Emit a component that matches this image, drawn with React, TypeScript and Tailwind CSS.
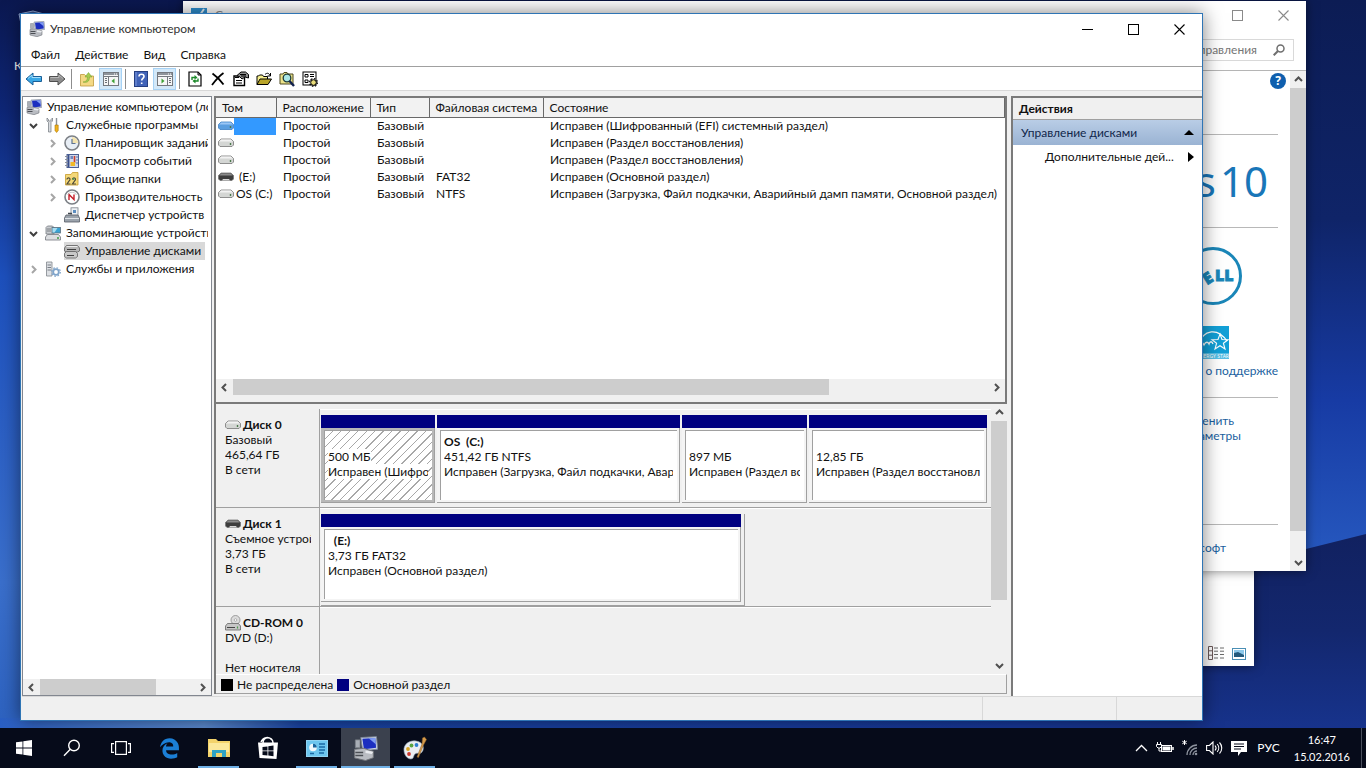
/*
this file:
    - draws the desktop with the computer management window, two windows behind it and the taskbar
*/

import type { ReactNode } from "react";
import clsx from "clsx";
import { FaEdgeLegacy } from "react-icons/fa";


/* ---------- small icons ---------- */

function ComputerIcon({ size = 16 }: { size?: number }) {
    return (
        <svg width={size} height={size} viewBox="0 0 16 16">
            <path d="M5 1l10-.6.8 8-9.600 1.200z" fill="#c9d2e2" stroke="#7d8797" strokeWidth=".6" />
            <path d="M6 1.800l8.200-.5.6 6.200-7.800.9z" fill="#1c2fc0" />
            <path d="M10 1.500l4.200-.3.4 4z" fill="#7f9cf2" />
            <path d="M1 8.500l6-.6 6 2v4L8 15.700 1 14z" fill="#b9bcc2" stroke="#6f7278" strokeWidth=".6" />
            <path d="M1.500 10.500h5M1.500 12.500h5" stroke="#4c4f55" strokeWidth="1" />
            <path d="M8 9.300l5 .8-1 1.400-4-.6z" fill="#e9ebef" />
            <path d="M1.500 2.500h3v5h-3z" fill="#a9aeb6" stroke="#7b8088" strokeWidth=".5" />
        </svg>
    );
}

function DriveIcon({ tone = "light" }: { tone?: "light" | "dark" | "selected" }) {
    const top = tone === "dark" ? "#8b8b8b" : tone === "selected" ? "#9cc6f5" : "#f2f2f2";
    const front = tone === "dark" ? "#3d3d3d" : tone === "selected" ? "#5b9ee0" : "#d4d6d4";
    const edge = tone === "selected" ? "#3f80c4" : "#777777";
    return (
        <svg width="16" height="10" viewBox="0 0 16 10" className="shrink-0">
            <path d="M3 1h10l2.500 2.500v3.500L14 8.500H2L.5 7V3.500z" fill={front} stroke={edge} strokeWidth=".8" />
            <path d="M3.200 1.400h9.600l2 2.200H1.200z" fill={top} />
            {tone === "dark"
                ? <path d="M4 8.500l1-1.500h6l1 1.500z" fill="#d8d8d8" />
                : <path d="M12.500 5v2" stroke="#4c7a4c" strokeWidth="1.400" />}
        </svg>
    );
}

function CdIcon() {
    return (
        <svg width="16" height="16" viewBox="0 0 16 16" className="shrink-0">
            <circle cx="10.500" cy="5" r="4.500" fill="#dcdcdc" stroke="#8a8a8a" strokeWidth=".8" />
            <circle cx="10.500" cy="5" r="1.300" fill="#ffffff" stroke="#8a8a8a" strokeWidth=".6" />
            <path d="M2.500 8.500h11L15.500 11v4H.5v-4z" fill="#c6c6c6" stroke="#666666" strokeWidth=".8" />
            <path d="M2 12.500h8" stroke="#444444" />
            <path d="M12.500 11.500v2" stroke="#4c9a4c" strokeWidth="1.200" />
        </svg>
    );
}

function ToolsIcon() {
    return (
        <svg width="16" height="16" viewBox="0 0 16 16">
            <path d="M2 1v3l1.500 1.500V15h2.500V5.500L7.500 4V1L6 2.500v1.500H3.500V2.500z" fill="#d9dce0" stroke="#70757c" strokeWidth=".7" />
            <path d="M11.500 1v7" stroke="#8a8f96" strokeWidth="1.400" />
            <path d="M10 8h3.200v5.500L11.600 15.500 10 13.500z" fill="#f1b21c" stroke="#a8760a" strokeWidth=".6" />
        </svg>
    );
}

function ClockIcon() {
    return (
        <svg width="16" height="16" viewBox="0 0 16 16">
            <circle cx="8" cy="8" r="7" fill="#e8eef5" stroke="#7c8086" strokeWidth="1.600" />
            <path d="M8 2a6 6 0 0 1 6 6H8z" fill="#f3e3ae" />
            <path d="M8 4v4.500h3.500" stroke="#5f7492" strokeWidth="1.200" fill="none" />
        </svg>
    );
}

function EventsIcon() {
    return (
        <svg width="16" height="16" viewBox="0 0 16 16">
            <rect x="3" y="1.500" width="11.500" height="13" fill="#cfd8ea" stroke="#4a5f93" />
            <path d="M4.500 2v12" stroke="#3a4f8a" strokeWidth="1.800" />
            <path d="M1 3.500h3M1 6.500h3M1 9.500h3M1 12.500h3" stroke="#8a909b" />
            <rect x="6.500" y="3" width="2.500" height="3" fill="#6f86bd" />
            <path d="M10.500 3v7" stroke="#c83b2c" strokeWidth="1.600" />
            <rect x="6.500" y="9" width="4.500" height="4" fill="#f1b928" />
            <path d="M12 4h2M12 7h2M12 10h2" stroke="#5973b0" />
        </svg>
    );
}

function SharedIcon() {
    return (
        <svg width="16" height="16" viewBox="0 0 16 16">
            <path d="M1.500 3.500h5.500l1.500-2h5.500v12.500h-12.500z" fill="#f4d878" stroke="#c79a2b" strokeWidth=".8" />
            <path d="M3 8.500a1.500 1.500 0 1 1 2.500 1L3 13h3.500M8.500 8.500a1.500 1.500 0 1 1 2.500 1L8.500 13H12" fill="none" stroke="#4e4a3a" strokeWidth="1.200" />
            <circle cx="9.500" cy="8" r="1" fill="#4f9c55" />
        </svg>
    );
}

function PerfIcon() {
    return (
        <svg width="16" height="16" viewBox="0 0 16 16">
            <circle cx="8" cy="8" r="7" fill="#ffffff" stroke="#7c8086" strokeWidth="1.600" />
            <path d="M5 11V5.500l5 5V5.500" stroke="#c51f2a" strokeWidth="1.400" fill="none" />
            <path d="M3.500 6a5 5 0 0 1 9 0" stroke="#b9bcc0" strokeWidth=".8" fill="none" />
        </svg>
    );
}

function DeviceIcon() {
    return (
        <svg width="16" height="16" viewBox="0 0 16 16">
            <rect x="7" y=".8" width="7" height="8" fill="#eef1f4" stroke="#7c828a" strokeWidth=".8" />
            <rect x="9" y="3" width="3" height="3" fill="#5b8dc0" />
            <path d="M2 8h12l1.500 3v4H.5v-4z" fill="#9ba3ac" stroke="#565c64" strokeWidth=".8" />
            <path d="M1 11.500h14" stroke="#dfe3e7" />
            <path d="M4 6.500h4" stroke="#3f454c" strokeWidth="1.500" />
        </svg>
    );
}

function StorageIcon() {
    return (
        <svg width="16" height="16" viewBox="0 0 16 16">
            <path d="M1 2.500L2.500 1h5L9 2.500V9H1z" fill="#c9ccd0" stroke="#777b81" strokeWidth=".8" />
            <path d="M2 4h4M2 6h4" stroke="#666a70" strokeWidth=".8" />
            <rect x="7" y="2.500" width="8.500" height="5.500" fill="#3aa2d2" stroke="#5d6f7c" strokeWidth=".8" />
            <path d="M7.500 3h5l-3 4.500h-2z" fill="#a9def2" />
            <path d="M2.500 9.500h11l2 2.500v3H.5v-3z" fill="#dcdee1" stroke="#73777d" strokeWidth=".8" />
            <path d="M13 12v2" stroke="#3f9a43" strokeWidth="1.500" />
        </svg>
    );
}

function DiskMgmtIcon() {
    return (
        <svg width="16" height="16" viewBox="0 0 16 16">
            <path d="M2.500 2.500h11l2 2.500v3l-2 1H2.500l-2-1V5z" fill="#b7b7b7" stroke="#5f5f5f" strokeWidth=".8" />
            <path d="M2.500 3.500h11" stroke="#ededed" />
            <path d="M2.500 8.500h9l2 2v3l-2 1.500h-9l-2-1.500v-3z" fill="#c8c8c8" stroke="#5f5f5f" strokeWidth=".8" />
            <path d="M3 6.500h9M3 12.500h7" stroke="#3f3f3f" />
        </svg>
    );
}

function ServicesIcon() {
    return (
        <svg width="16" height="16" viewBox="0 0 16 16">
            <path d="M1.500 1h5.500v14H1.500z" fill="#dde0e4" stroke="#80858c" strokeWidth=".8" />
            <path d="M2.500 4h3.500M2.500 6.500h3.500M2.500 9h3.500" stroke="#5f656d" strokeWidth=".8" />
            <circle cx="11" cy="11" r="2.800" fill="none" stroke="#7fa4ca" strokeWidth="1.800" />
            <circle cx="11" cy="11" r="4.300" fill="none" stroke="#7fa4ca" strokeWidth="1.200" strokeDasharray="1.600 1.780" />
        </svg>
    );
}


/* ---------- toolbar icons ---------- */

function ArrowIcon({ back = false }: { back?: boolean }) {
    return (
        <svg width="18" height="16" viewBox="0 0 18 16" className={clsx(!back && "-scale-x-100")}>
            <path d="M1 8l7-6v3.500h8.500v5H8V14z" fill={back ? "#39a8e6" : "#8e8e8e"} stroke={back ? "#1b5f97" : "#4f4f4f"} strokeLinejoin="round" />
            <path d="M3 7.500l4-3.500v2.500h8.500" fill="none" stroke={back ? "#a3ddfa" : "#b8b8b8"} />
        </svg>
    );
}

function UpFolderIcon() {
    return (
        <svg width="16" height="16" viewBox="0 0 16 16">
            <path d="M1.500 3.500h4l1.500 1.500h7.500v10h-13z" fill="#f4d985" stroke="#bf9a3c" strokeWidth=".8" />
            <path d="M4 11c3 0 4.500-2 4.500-5H6L9.500 1.500 13 6h-2.500c0 5-3 6-6.500 5z" fill="#a5cc50" stroke="#6f9f2f" strokeWidth=".5" />
        </svg>
    );
}

function PaneIcon({ right = false }: { right?: boolean }) {
    return (
        <svg width="16" height="14" viewBox="0 0 16 14">
            <rect x=".5" y=".5" width="15" height="13" fill="#f6f6f6" stroke="#75797f" />
            <path d="M1 2h14" stroke="#8f949b" strokeWidth="2" />
            <path d="M11 2h3" stroke="#ffffff" strokeDasharray="1 1" />
            <path d="M1 4.500h14" stroke="#75797f" />
            <path d={right ? "M10.500 5v8" : "M5.500 5v8"} stroke="#75797f" />
            <path d={right ? "M12 6.500h2M12 8.500h2M12 10.500h2" : "M2 6.500h2M2 8.500h2M2 10.500h2"} stroke="#6b6f75" />
            <path d={right ? "M4.500 6.500v5l3-2.500z" : "M11.500 6.500v5l-3-2.500z"} fill="#3ea235" />
        </svg>
    );
}

function HelpIcon() {
    return (
        <svg width="14" height="16" viewBox="0 0 14 16">
            <rect x=".5" y=".5" width="13" height="15" fill="#4163b8" stroke="#263f82" />
            <path d="M2 1v14" stroke="#7f9ade" />
            <path d="M5 5.500c0-3 5-3 5 0 0 1.800-2.300 2-2.300 4M7.700 11.500v1.500" fill="none" stroke="#ffffff" strokeWidth="1.600" />
        </svg>
    );
}

function RefreshIcon() {
    return (
        <svg width="14" height="16" viewBox="0 0 14 16">
            <path d="M1 1h9l3 3v11H1z" fill="#ffffff" stroke="#000000" strokeWidth="1.200" />
            <path d="M10 1v3h3" fill="none" stroke="#000000" />
            <path d="M4 9V6.500h3M10 7.500V10H7" fill="none" stroke="#1d8a2a" strokeWidth="1.400" />
            <path d="M6.500 4v5L9.500 6.500zM7.500 7.500v5L4.500 10z" fill="#1d8a2a" />
        </svg>
    );
}

function DeleteIcon() {
    return (
        <svg width="14" height="14" viewBox="0 0 14 14">
            <path d="M1.500 1.500C5 4 10 9 12.500 12.500M12.500 1C8 4 4 9 1 13" fill="none" stroke="#000000" strokeWidth="1.800" />
        </svg>
    );
}

function PropertiesIcon() {
    return (
        <svg width="16" height="16" viewBox="0 0 16 16">
            <path d="M1 5h10.500v9.500H1z" fill="#ffffff" stroke="#000000" strokeWidth="1.400" />
            <path d="M3 9.500h6M3 12h6M2 6.500h4" stroke="#000000" />
            <path d="M4 4.500l4-3.500h4.500L15.500 3.500V7L12 6 9 8 7 6z" fill="#8f8f8f" stroke="#000000" />
            <path d="M7 3.500h6M8 5h5" stroke="#000000" />
        </svg>
    );
}

function OpenIcon() {
    return (
        <svg width="16" height="14" viewBox="0 0 16 14">
            <path d="M1 12.500V4h1.500l1-1h3l1 1.500h4V7" fill="#f7ef8d" stroke="#000000" />
            <path d="M1 12.500L4 7h11.500l-3.500 5.500z" fill="#b9a52a" stroke="#000000" />
            <path d="M9 2.500c2-2 4-1.500 5 1M14.500 1v3h-3" fill="none" stroke="#000000" />
        </svg>
    );
}

function SearchFolderIcon() {
    return (
        <svg width="16" height="16" viewBox="0 0 16 16">
            <path d="M1 3h3l1-1.500h3L9 3h5v10H1z" fill="#ece38a" stroke="#4d4920" />
            <circle cx="8" cy="7" r="3.800" fill="#a8e6e6" stroke="#1c3b3b" strokeWidth="1.300" />
            <path d="M10.500 10l4.500 5" stroke="#10204e" strokeWidth="2.400" />
        </svg>
    );
}

function SettingsListIcon() {
    return (
        <svg width="16" height="16" viewBox="0 0 16 16">
            <rect x="1" y="1" width="13" height="13" fill="#ffffff" stroke="#000000" />
            <path d="M3 3.500h3v2.500H3zM3 9h3v2.500H3z" fill="#ffffff" stroke="#000000" />
            <path d="M8 3.500h4M8 5.500h4M8 9h2" stroke="#000000" />
            <circle cx="11.500" cy="11.500" r="2.800" fill="#e8dc7a" stroke="#000000" />
            <circle cx="11.500" cy="11.500" r="3.900" fill="none" stroke="#000000" strokeWidth="1.200" strokeDasharray="1.500 1.560" />
        </svg>
    );
}


/* ---------- scrollbars ---------- */

type Direction = "up" | "down" | "left" | "right";

const chevrons: Record<Direction, string> = {
    up: "M1 6l3.500-3.500L8 6",
    down: "M1 3l3.500 3.500L8 3",
    left: "M6 1L2.500 4.500 6 8",
    right: "M3 1l3.500 3.500L3 8",
};

function Chevron({ dir, color = "#505050", width = 2 }: { dir: Direction; color?: string; width?: number }) {
    return (
        <svg width="9" height="9" viewBox="0 0 9 9">
            <path d={chevrons[dir]} fill="none" stroke={color} strokeWidth={width} />
        </svg>
    );
}

function ScrollButton({ dir }: { dir: Direction }) {
    return (
        <button type="button" aria-label={dir} className="flex size-[17px] shrink-0 items-center justify-center">
            <Chevron dir={dir} />
        </button>
    );
}

function HScroll({ share }: { share: number }) {
    return (
        <div className="flex h-4 shrink-0 items-center bg-[#f0f0f0]">
            <ScrollButton dir="left" />
            <div className="h-full flex-1">
                <div className="h-full bg-[#cdcdcd]" style={{ width: `${share}%` }} />
            </div>
            <ScrollButton dir="right" />
        </div>
    );
}

function VScroll({ share }: { share: number }) {
    return (
        <div className="flex w-4 shrink-0 flex-col items-center bg-[#f0f0f0]">
            <ScrollButton dir="up" />
            <div className="w-full flex-1">
                <div className="w-full bg-[#cdcdcd]" style={{ height: `${share}%` }} />
            </div>
            <ScrollButton dir="down" />
        </div>
    );
}


/* ---------- console tree ---------- */

interface TreeNode {
    label: string;
    icon: ReactNode;
    level: 0 | 1 | 2;
    state?: "open" | "closed";
    selected?: boolean;
}

const tree: TreeNode[] = [
    { label: "Управление компьютером (локальным)", icon: <ComputerIcon />, level: 0 },
    { label: "Служебные программы", icon: <ToolsIcon />, level: 1, state: "open" },
    { label: "Планировщик заданий", icon: <ClockIcon />, level: 2, state: "closed" },
    { label: "Просмотр событий", icon: <EventsIcon />, level: 2, state: "closed" },
    { label: "Общие папки", icon: <SharedIcon />, level: 2, state: "closed" },
    { label: "Производительность", icon: <PerfIcon />, level: 2, state: "closed" },
    { label: "Диспетчер устройств", icon: <DeviceIcon />, level: 2 },
    { label: "Запоминающие устройства", icon: <StorageIcon />, level: 1, state: "open" },
    { label: "Управление дисками", icon: <DiskMgmtIcon />, level: 2, selected: true },
    { label: "Службы и приложения", icon: <ServicesIcon />, level: 1, state: "closed" },
];

function ConsoleTree() {
    return (
        <nav className="flex w-[190px] shrink-0 flex-col border border-[#828790] bg-white">
            <ul className="flex-1 overflow-hidden pt-px pr-[3px]">
                {tree.map((node) => (
                    <li
                        key={node.label}
                        className={clsx(
                            "flex h-[18px] items-center overflow-hidden whitespace-nowrap",
                            node.level < 2 && "pl-[3px]",
                            node.level === 2 && "pl-[22px]",
                        )}
                    >
                        {node.level > 0 && (
                            <span className="flex w-[15px] shrink-0 items-center justify-center">
                                {node.state && (
                                    <Chevron
                                        dir={node.state === "open" ? "down" : "right"}
                                        color={node.state === "open" ? "#404040" : "#a6a6a6"}
                                    />
                                )}
                            </span>
                        )}
                        <button
                            type="button"
                            className={clsx(
                                "flex h-[18px] items-center gap-[5px] pr-1",
                                node.level > 0 && "ml-1",
                                node.selected && "bg-[#d9d9d9]",
                            )}
                        >
                            <span className="shrink-0">{node.icon}</span>
                            {node.label}
                        </button>
                    </li>
                ))}
            </ul>
            <HScroll share={75} />
        </nav>
    );
}


/* ---------- volume list ---------- */

const volumes = [
    { name: "", drive: "selected", fs: "", status: "Исправен (Шифрованный (EFI) системный раздел)" },
    { name: "", drive: "light", fs: "", status: "Исправен (Раздел восстановления)" },
    { name: "", drive: "light", fs: "", status: "Исправен (Раздел восстановления)" },
    { name: " (E:)", drive: "dark", fs: "FAT32", status: "Исправен (Основной раздел)" },
    { name: "OS (C:)", drive: "light", fs: "NTFS", status: "Исправен (Загрузка, Файл подкачки, Аварийный дамп памяти, Основной раздел)" },
] as const;

const columns = ["Том", "Расположение", "Тип", "Файловая система", "Состояние"];

function VolumeList() {
    return (
        <div className="flex min-h-0 flex-1 flex-col border-r-2 border-b-2 border-[#7a7a7a] bg-white">
            <div className="flex-1 overflow-hidden">
                <table className="w-full table-fixed border-collapse text-left whitespace-nowrap">
                    <colgroup>
                        <col className="w-[60px]" />
                        <col className="w-[94px]" />
                        <col className="w-[59px]" />
                        <col className="w-[114px]" />
                        <col />
                    </colgroup>
                    <thead>
                        <tr>
                            {columns.map((title) => (
                                <th
                                    key={title}
                                    className="h-[19px] border-r border-b border-[#696969] bg-[#f2f2f2] px-1.5 pt-0.5 pb-0 font-normal"
                                >
                                    {title}
                                </th>
                            ))}
                        </tr>
                    </thead>
                    <tbody>
                        {volumes.map((volume, i) => (
                            <tr key={i}>
                                <td className="h-[17px] p-0">
                                    <div
                                        className={clsx(
                                            "flex h-[17px] items-center overflow-hidden pl-0.5",
                                            volume.drive !== "selected" && "gap-0.5",
                                        )}
                                    >
                                        <DriveIcon tone={volume.drive} />
                                        {volume.drive === "selected"
                                            ? <span className="h-full flex-1 bg-[#3399ff]" />
                                            : <span className="whitespace-pre">{volume.name}</span>}
                                    </div>
                                </td>
                                <td className="py-0 pr-0 pl-[7px]">Простой</td>
                                <td className="py-0 pr-0 pl-[7px]">Базовый</td>
                                <td className="py-0 pr-0 pl-[7px]">{volume.fs}</td>
                                <td className="py-0 pr-0 pl-[7px]">{volume.status}</td>
                            </tr>
                        ))}
                    </tbody>
                </table>
            </div>
            <HScroll share={79} />
            <div className="h-[7px] shrink-0 bg-[#f0f0f0]" />
        </div>
    );
}


/* ---------- disk map ---------- */

function Partition({ title, size, status, hatched = false }: {
    title?: string;
    size: string;
    status: string;
    hatched?: boolean;
}) {
    return (
        <div className="flex min-w-0 flex-col">
            <div className="h-[13px] bg-[#000080]" />
            <div
                className={clsx(
                    "flex flex-1 border-r border-b border-[#a0a0a0] p-0.5 pl-[3px]",
                    hatched ? "bg-[#b8b8b8]" : "bg-[#f4f4f4]",
                )}
            >
                <div
                    className={clsx(
                        "min-w-0 flex-1 overflow-hidden border-t border-l border-[#a0a0a0] pt-[3px] pr-1 pl-[3px] whitespace-nowrap",
                        hatched
                            ? "bg-[repeating-linear-gradient(135deg,#ffffff_0px,#ffffff_5px,#a8a8a8_5px,#a8a8a8_6px)]"
                            : "bg-white",
                    )}
                >
                    <p className="h-[15px] font-bold whitespace-pre">{title}</p>
                    <p className="overflow-hidden"><span className={clsx(hatched && "bg-white")}>{size}</span></p>
                    <p className="overflow-hidden"><span className={clsx(hatched && "bg-white")}>{status}</span></p>
                </div>
            </div>
        </div>
    );
}

function DiskRow({ icon, name, lines, children }: {
    icon: ReactNode;
    name: string;
    lines: string[];
    children?: ReactNode;
}) {
    return (
        <div className="flex h-[99px] shrink-0 border-b border-[#a0a0a0] leading-[15px]">
            <div className="w-[104px] shrink-0 overflow-hidden border-r border-[#a0a0a0] pt-2 pl-[9px] whitespace-nowrap">
                <p className="flex h-[15px] items-center gap-0.5 font-bold">{icon}{name}</p>
                {lines.map((line, i) => (
                    <p key={i} className="mr-2 h-[15px] overflow-hidden">{line}</p>
                ))}
            </div>
            <div className="min-w-0 flex-1 border-t border-white pt-[5px] pr-1 pl-px">{children}</div>
        </div>
    );
}

function DiskMap() {
    return (
        <div className="flex h-[270px] shrink-0">
            <div className="min-w-0 flex-1 overflow-hidden pt-[5px]">
                <DiskRow icon={<DriveIcon />} name="Диск 0" lines={["Базовый", "465,64 ГБ", "В сети"]}>
                    <div className="grid h-full grid-cols-[114fr_243fr_125fr_178fr] gap-0.5 pb-1">
                        <Partition size="500 МБ" status="Исправен (Шифрованный (EFI) системный раздел)" hatched />
                        <Partition title="OS  (C:)" size="451,42 ГБ NTFS" status="Исправен (Загрузка, Файл подкачки, Аварийный дамп памяти)" />
                        <Partition size="897 МБ" status="Исправен (Раздел восстановления)" />
                        <Partition size="12,85 ГБ" status="Исправен (Раздел восстановления)" />
                    </div>
                </DiskRow>
                <DiskRow icon={<DriveIcon tone="dark" />} name="Диск 1" lines={["Съемное устройство", "3,73 ГБ", "В сети"]}>
                    <div className="grid h-full w-7/11 border-r border-b border-[#a0a0a0] pr-[3px] pb-[3px]">
                        <Partition title="  (E:)" size="3,73 ГБ FAT32" status="Исправен (Основной раздел)" />
                    </div>
                </DiskRow>
                <DiskRow icon={<CdIcon />} name="CD-ROM 0" lines={["DVD (D:)", "", "Нет носителя"]} />
            </div>
            <VScroll share={76} />
        </div>
    );
}

function Legend() {
    return (
        <div className="flex h-5 shrink-0 items-center gap-1 border-t border-r border-b border-t-white border-r-[#a0a0a0] border-b-[#a0a0a0] pt-0.5 pl-[5px]">
            <span className="size-3 bg-black" />
            Не распределена
            <span className="size-3 bg-[#000080]" />
            Основной раздел
        </div>
    );
}

function ActionsPane() {
    return (
        <aside className="w-[191px] shrink-0 border-t-2 border-l-2 border-[#7a7a7a] bg-white">
            <h2 className="flex h-[22px] items-center border-b border-[#a0a0a0] bg-[#f0f0f0] pl-1.5 font-bold">
                Действия
            </h2>
            <button
                type="button"
                className="flex h-[25px] w-full items-center justify-between bg-linear-to-b from-[#b9cde6] to-[#9ab3d3] pr-2 pl-2 text-[#10264a]"
            >
                Управление дисками
                <svg width="10" height="5" viewBox="0 0 10 5"><path d="M0 5l5-5 5 5z" fill="#000000" /></svg>
            </button>
            <button type="button" className="flex h-6 w-full items-center justify-between pr-2 pl-8">
                Дополнительные дей...
                <svg width="6" height="10" viewBox="0 0 6 10"><path d="M0 0l6 5-6 5z" fill="#000000" /></svg>
            </button>
        </aside>
    );
}


/* ---------- windows ---------- */

function CaptionButtons({ color }: { color: string }) {
    return (
        <div className="flex h-full">
            <button type="button" aria-label="Свернуть" className="flex w-[46px] items-center justify-center">
                <svg width="11" height="11" viewBox="0 0 11 11"><path d="M0 5.500h11" stroke={color} /></svg>
            </button>
            <button type="button" aria-label="Развернуть" className="flex w-[46px] items-center justify-center">
                <svg width="11" height="11" viewBox="0 0 11 11"><rect x=".5" y=".5" width="10" height="10" fill="none" stroke={color} /></svg>
            </button>
            <button type="button" aria-label="Закрыть" className="flex w-[46px] items-center justify-center">
                <svg width="11" height="11" viewBox="0 0 11 11"><path d="M.5.5l10 10M10.500.5l-10 10" stroke={color} strokeWidth="1.100" /></svg>
            </button>
        </div>
    );
}

function ToolButton({ label, active = false, children }: { label: string; active?: boolean; children: ReactNode }) {
    return (
        <button
            type="button"
            aria-label={label}
            className={clsx(
                "flex h-[22px] w-[23px] items-center justify-center",
                active && "ml-px border border-[#a6d2f5] bg-[#d3e8f8]",
            )}
        >
            {children}
        </button>
    );
}

function Separator() {
    return <span className="mx-[3px] h-5 w-px bg-[#8d8d8d]" />;
}

function ManagementWindow() {
    return (
        <section className="absolute top-[13px] right-[163px] bottom-[7px] left-5 flex flex-col border border-[#2f75b5] bg-[#f0f0f0] pl-px shadow-[0_0_18px_rgba(0,0,0,0.5)]">
            <div className="-ml-px flex h-[30px] shrink-0 items-center justify-between bg-white pl-2">
                <h1 className="flex items-center gap-[5px] text-[#333333]"><ComputerIcon />Управление компьютером</h1>
                <CaptionButtons color="#000000" />
            </div>
            <div className="-ml-px flex h-[23px] shrink-0 items-center gap-[15px] border-b border-[#a0a0a0] bg-white pl-2.5">
                {["Файл", "Действие", "Вид", "Справка"].map((item) => (
                    <button key={item} type="button">{item}</button>
                ))}
            </div>
            <div className="-ml-px flex h-6 shrink-0 items-center border-b border-[#d8d8d8] bg-white pl-px">
                <ToolButton label="Назад"><ArrowIcon back /></ToolButton>
                <ToolButton label="Вперед"><ArrowIcon /></ToolButton>
                <Separator />
                <ToolButton label="Вверх"><UpFolderIcon /></ToolButton>
                <ToolButton label="Дерево консоли" active><PaneIcon /></ToolButton>
                <Separator />
                <ToolButton label="Справка"><HelpIcon /></ToolButton>
                <ToolButton label="Панель действий" active><PaneIcon right /></ToolButton>
                <Separator />
                <ToolButton label="Обновить"><RefreshIcon /></ToolButton>
                <ToolButton label="Удалить"><DeleteIcon /></ToolButton>
                <ToolButton label="Свойства"><PropertiesIcon /></ToolButton>
                <ToolButton label="Открыть"><OpenIcon /></ToolButton>
                <ToolButton label="Проводник"><SearchFolderIcon /></ToolButton>
                <ToolButton label="Параметры"><SettingsListIcon /></ToolButton>
            </div>
            <div className="flex min-h-0 flex-1 pt-[5px]">
                <ConsoleTree />
                <main className="mb-0.5 ml-0.5 flex min-w-0 flex-1 flex-col border-t-2 border-l-2 border-[#7a7a7a]">
                    <VolumeList />
                    <DiskMap />
                    <Legend />
                </main>
                <div className="w-1 shrink-0" />
                <ActionsPane />
            </div>
            <div className="flex h-6 shrink-0 justify-end border-t border-[#d8d8d8]">
                <div className="w-[134px] border-l border-[#d8d8d8]" />
                <div className="w-[86px] border-l border-[#d8d8d8]" />
            </div>
        </section>
    );
}

function DellLogo() {
    return (
        <svg width="60" height="60" viewBox="0 0 60 60">
            <circle cx="30" cy="30" r="27.500" fill="#ffffff" stroke="#1a86b8" strokeWidth="3" />
            <g fill="#1a86b8" stroke="#1a86b8" strokeWidth=".8" fontFamily="Open Sans, sans-serif" fontWeight="800" fontSize="16">
                <text x="6" y="35">D</text>
                <text x="20" y="37" transform="rotate(-32 26 31)">E</text>
                <text x="32" y="35">LL</text>
            </g>
        </svg>
    );
}

function EnergyStarLogo() {
    return (
        <svg width="33" height="33" viewBox="0 0 33 33">
            <rect width="33" height="33" fill="#12a0d7" />
            <path d="M1 20C8 2 22 2 31 15" fill="none" stroke="#ffffff" strokeWidth="1.200" />
            <path d="M2 19c3-4 5-2 6 0 2-4 4-3 5-1 1-3 3-3 4 0" fill="none" stroke="#ffffff" strokeWidth="1.300" />
            <path d="M24 8l2 5.500 6 .2-4.600 3.500 1.600 5.800-5-3.300-5 3.300 1.600-5.800L16 13.700l6-.2z" fill="none" stroke="#ffffff" strokeWidth="1.100" />
            <rect y="27" width="33" height="6" fill="#58bfe6" />
            <text x="1" y="32" fontSize="5" fontFamily="Open Sans, sans-serif" fill="#ffffff">ENERGY STAR</text>
        </svg>
    );
}

function SystemWindow() {
    return (
        <section className="absolute top-px right-[60px] bottom-[157px] left-[183px] flex flex-col bg-white shadow-[0_0_10px_rgba(0,0,0,0.5)]">
            <div className="flex h-7 shrink-0 items-center justify-between pl-2">
                <h2 className="flex items-center gap-2 text-[#8a8a8a]">
                    <svg width="16" height="14" viewBox="0 0 16 14">
                        <rect width="16" height="14" fill="#2f8fd0" />
                        <path d="M5 6l2.500 3L13 1" fill="none" stroke="#e4f3fc" strokeWidth="2" />
                    </svg>
                    Система
                </h2>
                <CaptionButtons color="#8a8a8a" />
            </div>
            <div className="flex h-[42px] shrink-0 items-center justify-end border-b border-[#b5b5b5] pr-3">
                <label className="flex h-[22px] items-center border border-[#d9d9d9] px-2 text-[#757575]">
                    <input
                        type="text"
                        aria-label="Поиск"
                        placeholder="Поиск в панели управления"
                        className="w-[190px] pr-4 text-right outline-none placeholder:text-[#757575]"
                    />
                    <svg width="12" height="12" viewBox="0 0 12 12">
                        <circle cx="7.500" cy="4.500" r="3.500" fill="none" stroke="#6f6f6f" strokeWidth="1.500" />
                        <path d="M5 7L.7 11.300" stroke="#6f6f6f" strokeWidth="2" />
                    </svg>
                </label>
            </div>
            <div className="flex min-h-0 flex-1">
                <div className="flex flex-1 flex-col items-end pr-3 text-[#1a5fa0]">
                    <button
                        type="button"
                        aria-label="Справка"
                        className="-mr-2 mt-0.5 flex size-4 items-center justify-center rounded-full bg-[#0f5fae] font-['Noto_Sans',sans-serif] font-bold text-white"
                    >
                        ?
                    </button>
                    <hr className="mt-[45px] w-full border-[#b8b8b8]" />
                    <p className="mt-4 mr-2.5 flex gap-1 font-['Noto_Sans',sans-serif] text-[42px] leading-[60px] text-[#1976b8]">
                        <span>Windows</span>
                        <span>10</span>
                    </p>
                    <hr className="mt-4 w-full border-[#b8b8b8]" />
                    <div className="mt-[18px] mr-[35px]"><DellLogo /></div>
                    <div className="mt-5 mr-[49px]"><EnergyStarLogo /></div>
                    <a href="#support" className="mt-1">Сведения о поддержке</a>
                    <hr className="mt-[18px] w-full border-[#b8b8b8]" />
                    <a href="#change" className="mt-[15px] mr-[37px] leading-[15px]">Изменить<br />параметры</a>
                    <hr className="mt-[81px] w-full border-[#b8b8b8]" />
                    <a href="#license" className="mt-[15px] mr-[52px]">Майкрософт</a>
                </div>
                <VScroll share={95} />
            </div>
        </section>
    );
}

function ExplorerWindow() {
    return (
        <section className="absolute right-[112px] bottom-[62px] left-[300px] flex h-[300px] items-end justify-end gap-2 bg-white px-2 pb-1.5 shadow-[0_0_10px_rgba(0,0,0,0.5)]">
            <svg width="16" height="14" viewBox="0 0 16 14">
                <path d="M.5.5h4v13h-4zM.5 4.800h4M.5 9.200h4" fill="none" stroke="#6d5a5a" />
                <path d="M6 2h4M12 2h4M6 5.200h4M12 5.200h4M6 8.500h4M12 8.500h4M6 12h4M12 12h4" stroke="#6a6a6a" />
            </svg>
            <svg width="14" height="12" viewBox="0 0 14 12">
                <rect x=".5" y=".5" width="13" height="11" fill="#ffffff" stroke="#4a8fb5" />
                <rect x="2" y="2" width="10" height="7" fill="#8cc8ea" />
                <path d="M2 5l4-1 6 3v2H2z" fill="#245a7d" />
            </svg>
        </section>
    );
}

function Wallpaper() {
    return (
        <svg className="absolute inset-0 size-full" viewBox="0 0 1366 728" preserveAspectRatio="none">
            <defs>
                <linearGradient id="left" x1="0" y1="0" x2="0" y2="1">
                    <stop offset="0" stopColor="#0b1850" />
                    <stop offset=".15" stopColor="#0e2676" />
                    <stop offset=".38" stopColor="#1d50bd" />
                    <stop offset=".8" stopColor="#3a6fcc" />
                    <stop offset="1" stopColor="#2d62c0" />
                </linearGradient>
                <linearGradient id="right" x1="0" y1="0" x2="0" y2="1">
                    <stop offset="0" stopColor="#0c1c54" />
                    <stop offset=".3" stopColor="#0f2468" />
                    <stop offset=".55" stopColor="#173ba4" />
                    <stop offset=".75" stopColor="#2556bd" />
                </linearGradient>
                <linearGradient id="lower" x1="0" y1="0" x2="0" y2="1">
                    <stop offset="0" stopColor="#112160" />
                    <stop offset=".5" stopColor="#13276e" />
                    <stop offset="1" stopColor="#17338c" />
                </linearGradient>
                <linearGradient id="floor" x1="0" y1="0" x2="1" y2="0">
                    <stop offset="0" stopColor="#2a5fc4" />
                    <stop offset=".17" stopColor="#5c8cd2" />
                    <stop offset=".25" stopColor="#1a45a6" />
                    <stop offset=".85" stopColor="#17389a" />
                    <stop offset="1" stopColor="#17338c" />
                </linearGradient>
            </defs>
            <rect width="700" height="728" fill="url(#left)" />
            <rect x="700" width="666" height="728" fill="url(#right)" />
            <path d="M700 728V690L1306 549L1366 534V728z" fill="url(#lower)" />
            <rect y="718" width="1203" height="10" fill="url(#floor)" />
        </svg>
    );
}


/* ---------- taskbar ---------- */

interface TaskItem {
    label: string;
    icon: ReactNode;
    running?: boolean;
    active?: boolean;
}

const tasks: TaskItem[] = [
    {
        label: "Пуск",
        icon: (
            <svg width="16" height="16" viewBox="0 0 16 16" fill="#ffffff">
                <path d="M0 2.300L6.500 1.400v6.200H0zM7.300 1.300L16 0v7.600H7.300zM0 8.400h6.500v6.200L0 13.700zM7.300 8.400H16V16l-8.700-1.300z" />
            </svg>
        ),
    },
    {
        label: "Поиск",
        icon: (
            <svg width="18" height="18" viewBox="0 0 18 18" fill="none" stroke="#ffffff" strokeWidth="1.400">
                <circle cx="11" cy="6.500" r="5.300" />
                <path d="M7.300 10.300L1 16.800" />
            </svg>
        ),
    },
    {
        label: "Представление задач",
        icon: (
            <svg width="20" height="16" viewBox="0 0 20 16" fill="none" stroke="#ffffff" strokeWidth="1.200">
                <rect x="4.600" y="1.600" width="10.800" height="12.800" />
                <path d="M3 3.600H.6v8.800H3M17 3.600h2.400v8.800H17" />
            </svg>
        ),
    },
    { label: "Microsoft Edge", icon: <FaEdgeLegacy className="size-[21px] text-[#1b7fd6]" /> },
    {
        label: "Проводник",
        running: true,
        icon: (
            <svg width="22" height="20" viewBox="0 0 22 20">
                <path d="M0 1h8l2 2h12v16H0z" fill="#f3d36b" />
                <path d="M1 5h20v9H1z" fill="#fbe89b" />
                <path d="M4 19v-7h14v7h-4v-4H8v4z" fill="#2fa3c4" />
            </svg>
        ),
    },
    {
        label: "Магазин",
        icon: (
            <svg width="22" height="24" viewBox="0 0 22 24">
                <path d="M6 7c0-7 10-7 10 0M4 6c2-5 8-6 11-2" fill="none" stroke="#ffffff" strokeWidth="1.500" />
                <path d="M1 6.500h20l-1.500 16.500L2.500 22z" fill="#ffffff" />
                <path d="M5.500 11l5-.6v4.100h-5zM11.300 10.300l5.200-.7v4.900h-5.200zM5.500 15.300h5v4.200l-5-.5zM11.300 15.300h5.200v5l-5.200-.7z" fill="#060b1a" />
            </svg>
        ),
    },
    {
        label: "Панель управления",
        running: true,
        icon: (
            <svg width="22" height="17" viewBox="0 0 22 17">
                <rect x=".5" y=".5" width="21" height="16" fill="#6cc5ee" stroke="#8fd3f2" />
                <circle cx="7" cy="7.500" r="3.800" fill="#f0f8fc" />
                <path d="M7 7.500V3.700a3.800 3.800 0 0 1 3.800 3.800z" fill="#18639c" />
                <path d="M13 4h6M13 7h6M13 10h6M4 13.500h4M13 13h5" stroke="#1a6aa5" strokeWidth="1.400" />
            </svg>
        ),
    },
    { label: "Управление компьютером", running: true, active: true, icon: <ComputerIcon size={25} /> },
    {
        label: "Paint",
        running: true,
        icon: (
            <svg width="24" height="24" viewBox="0 0 24 24">
                <path d="M1 15C0 8 7 4 13 5c7 1 9 7 6 11-2 3-5 0-7 2s-1 5-4 5c-4 0-6.500-4-7-8z" fill="#e9edf2" stroke="#8ea2b4" strokeWidth=".6" />
                <circle cx="5" cy="13" r="1.900" fill="#d7a425" />
                <circle cx="8.500" cy="9.500" r="1.900" fill="#58a43f" />
                <circle cx="13.500" cy="9" r="1.900" fill="#2c7fd0" />
                <circle cx="6" cy="18" r="1.900" fill="#cc3a30" />
                <path d="M21.500 1l-2 1-.5 6L14 21l1.500.6L20.500 9l3-5.500z" fill="#d39a4c" stroke="#8b5d22" strokeWidth=".5" />
            </svg>
        ),
    },
];

function Tray() {
    return (
        <div className="flex h-full items-center text-white">
            <div className="flex items-center gap-2">
                <svg width="13" height="8" viewBox="0 0 13 8"><path d="M1 7l5.500-5.500L12 7" fill="none" stroke="#ffffff" strokeWidth="1.300" /></svg>
                <svg width="18" height="14" viewBox="0 0 18 14" fill="none" stroke="#ffffff">
                    <path d="M1.500 1v2M4.500 1v2M.5 3.500h5v2L4 7H2L.5 5.500zM3 7v3h2" />
                    <rect x="5.500" y="4.500" width="10" height="6" />
                    <rect x="7" y="6" width="7" height="3" fill="#ffffff" />
                    <path d="M17 6v3" strokeWidth="1.500" />
                </svg>
                <svg width="16" height="16" viewBox="0 0 16 16" fill="none">
                    <path d="M2.500 0v5M.3 1.200l4.400 2.600M4.700 1.200L.3 3.800" stroke="#ffffff" />
                    <path d="M5 15A10 10 0 0 1 15 5M8 15a7 7 0 0 1 7-7M11 15a4 4 0 0 1 4-4" stroke="#8d939e" strokeWidth="1.300" />
                    <circle cx="14" cy="14" r="1.300" fill="#8d939e" />
                </svg>
                <svg width="17" height="14" viewBox="0 0 17 14" fill="none" stroke="#ffffff" strokeWidth="1.100">
                    <path d="M.6 4.500h2.800L7 1v12L3.400 9.500H.6z" />
                    <path d="M9 4.500c1.300 1.500 1.300 3.500 0 5M11.200 3c2 2.300 2 5.700 0 8M13.500 1.500c3 3.200 3 7.800 0 11" />
                </svg>
                <svg width="16" height="16" viewBox="0 0 16 16">
                    <path d="M0 1h16v11H10l-3 4v-4H0z" fill="#ffffff" />
                    <path d="M3 4h10M3 6.500h10M3 9h7" stroke="#060b1a" />
                </svg>
            </div>
            <button type="button" className="ml-2.5">РУС</button>
            <time className="ml-3.5 text-center text-[11px] leading-[17px]">16:47<br />15.02.2016</time>
            <span className="ml-[11px] h-full w-[5px] border-l border-[#4a4f5c]" />
        </div>
    );
}

function Taskbar() {
    return (
        <footer className="flex h-10 shrink-0 justify-between bg-[#060b1a]">
            <div className="flex">
                {tasks.map((task, i) => (
                    <button
                        key={task.label}
                        type="button"
                        aria-label={task.label}
                        className={clsx(
                            "relative flex items-center justify-center",
                            i < 2 ? "w-12" : "w-[49px]",
                            task.active && "bg-[#3b414e]",
                        )}
                    >
                        {task.icon}
                        {task.running && (
                            <span className={clsx("absolute bottom-0 h-0.5 bg-[#6fb0e6]", task.active ? "inset-x-0" : "inset-x-1")} />
                        )}
                    </button>
                ))}
            </div>
            <Tray />
        </footer>
    );
}

export default function App() {
    return (
        <div className="flex h-screen min-h-[560px] flex-col overflow-hidden font-['Lato','Noto_Sans',sans-serif] text-xs text-[#111111]">
            <div className="relative flex-1 overflow-hidden">
                <Wallpaper />
                <div className="absolute top-2.5 left-3.5 flex flex-col gap-[34px] text-white">
                    <svg width="44" height="14" viewBox="0 0 44 14">
                        <path d="M5 4l14-3 11 3-2 10H7z" fill="#31508f" stroke="#93a8d3" />
                    </svg>
                    <span>Корзина</span>
                </div>
                <ExplorerWindow />
                <SystemWindow />
                <ManagementWindow />
            </div>
            <Taskbar />
        </div>
    );
}
